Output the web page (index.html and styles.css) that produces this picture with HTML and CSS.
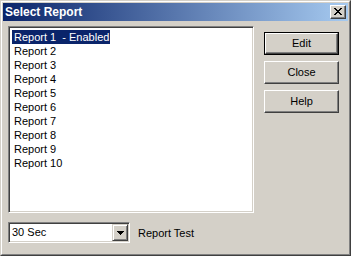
FILE: index.html
```html
<!DOCTYPE html>
<html>
<head>
<meta charset="utf-8">
<title>Select Report</title>
<link rel="stylesheet" href="styles.css">
</head>
<body>
<div class="window">
  <div class="frame">
    <div class="caption">
      <span class="title">Select Report</span>
      <span class="capbtn">
        <svg width="8" height="7" viewBox="0 0 8 7" shape-rendering="crispEdges">
          <path d="M0 0h2v1h-2zM6 0h2v1h-2zM1 1h2v1h-2zM5 1h2v1h-2zM2 2h4v1h-4zM3 3h2v1h-2zM2 4h4v1h-4zM1 5h2v1h-2zM5 5h2v1h-2zM0 6h2v1h-2zM6 6h2v1h-2z" fill="#000"/>
        </svg>
      </span>
    </div>
    <div class="client">
      <div class="left">
        <ul class="listbox">
          <li class="item selected">Report 1&nbsp; - Enabled</li>
          <li class="item">Report 2</li>
          <li class="item">Report 3</li>
          <li class="item">Report 4</li>
          <li class="item">Report 5</li>
          <li class="item">Report 6</li>
          <li class="item">Report 7</li>
          <li class="item">Report 8</li>
          <li class="item">Report 9</li>
          <li class="item">Report 10</li>
        </ul>
        <div class="bottom">
          <div class="combo">
            <span class="combo-text">30 Sec</span>
            <span class="drop">
              <svg width="7" height="4" viewBox="0 0 7 4" shape-rendering="crispEdges">
                <path d="M0 0h7v1h-7zM1 1h5v1h-5zM2 2h3v1h-3zM3 3h1v1h-1z" fill="#000"/>
              </svg>
            </span>
          </div>
          <span class="label">Report Test</span>
        </div>
      </div>
      <div class="buttons">
        <div class="btn default"><span class="btn-inner">Edit</span></div>
        <div class="btn"><span class="btn-inner">Close</span></div>
        <div class="btn"><span class="btn-inner">Help</span></div>
      </div>
    </div>
  </div>
</div>
</body>
</html>
```

FILE: styles.css
```css
* { box-sizing: border-box; }
html, body { margin: 0; padding: 0; background: #d4d0c8; }
body {
  font-family: "Liberation Sans", Arial, sans-serif;
  font-size: 11px;
  color: #000;
}
.window {
  width: 351px;
  height: 256px;
  border: 1px solid;
  border-color: #d4d0c8 #404040 #404040 #d4d0c8;
  background: #d4d0c8;
}
.frame {
  height: 100%;
  border: 1px solid;
  border-color: #ffffff #808080 #808080 #ffffff;
  padding: 1px;
  display: flex;
  flex-direction: column;
}
.caption {
  height: 18px;
  flex: none;
  background: linear-gradient(to right, #0a246a, #a6caf0);
  display: flex;
  align-items: center;
  justify-content: space-between;
  padding: 0 2px 0 2px;
}
.title {
  color: #fff;
  font-weight: bold;
  font-size: 12px;
  line-height: 18px;
}
.capbtn {
  width: 16px;
  height: 14px;
  background: #d4d0c8;
  border: 1px solid;
  border-color: #ffffff #404040 #404040 #ffffff;
  box-shadow: inset -1px -1px 0 #808080;
  display: flex;
  align-items: center;
  justify-content: center;
  padding: 0 1px 1px 0;
}
.capbtn svg { display: block; }
.client {
  flex: 1;
  display: flex;
  padding: 5px 9px 10px 5px;
}
.left {
  width: 246px;
  display: flex;
  flex-direction: column;
}
.listbox {
  list-style: none;
  margin: 0;
  height: 187px;
  background: #fff;
  border: 1px solid;
  border-color: #808080 #ffffff #ffffff #808080;
  box-shadow: inset 1px 1px 0 #404040, inset -1px -1px 0 #d4d0c8;
  padding: 3px 2px 2px 3px;
}
.item {
  height: 14px;
  line-height: 14px;
  padding: 0 2px;
  white-space: pre;
  width: max-content;
}
.item.selected {
  background: #0a246a;
  color: #fff;
  padding-right: 1px;
}
.bottom {
  margin-top: 9px;
  display: flex;
  align-items: center;
}
.combo {
  width: 122px;
  height: 21px;
  background: #fff;
  border: 1px solid;
  border-color: #808080 #ffffff #ffffff #808080;
  box-shadow: inset 1px 1px 0 #404040, inset -1px -1px 0 #d4d0c8;
  padding: 1px;
  display: flex;
  align-items: stretch;
}
.combo-text {
  flex: 1;
  padding-left: 2px;
  line-height: 17px;
}
.drop {
  width: 16px;
  background: #d4d0c8;
  border: 1px solid;
  border-color: #d4d0c8 #404040 #404040 #d4d0c8;
  box-shadow: inset 1px 1px 0 #ffffff, inset -1px -1px 0 #808080;
  display: flex;
  align-items: center;
  justify-content: center;
}
.drop svg { display: block; }
.label {
  margin-left: 8px;
  line-height: 14px;
}
.buttons {
  margin-left: 10px;
  padding-top: 6px;
  display: flex;
  flex-direction: column;
  gap: 6px;
}
.btn {
  width: 75px;
  height: 23px;
  background: #d4d0c8;
  border: 1px solid;
  border-color: #ffffff #404040 #404040 #ffffff;
  box-shadow: inset -1px -1px 0 #808080;
  display: flex;
}
.btn-inner {
  flex: 1;
  display: flex;
  align-items: center;
  justify-content: center;
  padding-bottom: 1px;
}
.btn.default {
  border: 1px solid #000;
  box-shadow: none;
}
.btn.default .btn-inner {
  border: 1px solid;
  border-color: #ffffff #404040 #404040 #ffffff;
  box-shadow: inset -1px -1px 0 #808080;
}
```
